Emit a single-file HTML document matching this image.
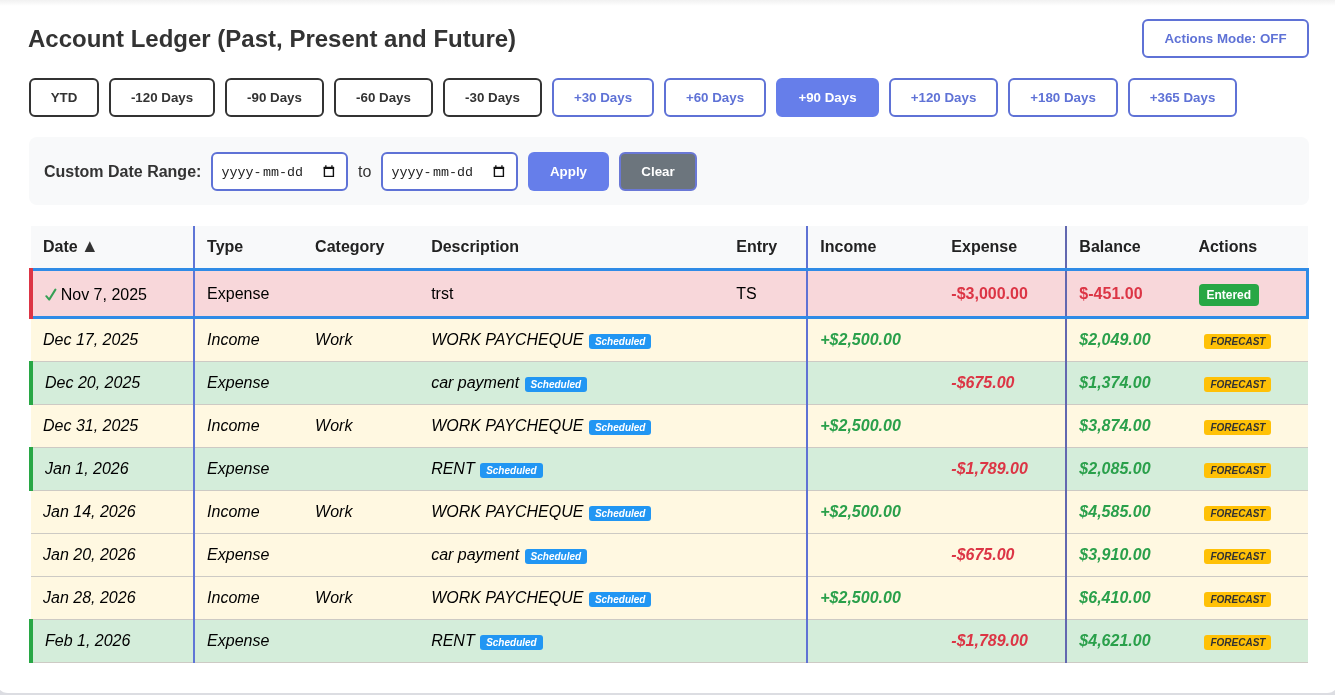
<!DOCTYPE html>
<html><head><meta charset="utf-8">
<style>
*{box-sizing:border-box}
html,body{margin:0;padding:0;width:1335px;height:695px;overflow:hidden;background:#fff;font-family:"Liberation Sans",sans-serif;color:#333}
.topshade{position:absolute;left:0;top:0;width:1335px;height:6px;background:linear-gradient(#f1f1f1,#fff)}
.botshade{position:absolute;left:0;top:693px;width:1335px;height:2px;background:#dbdbdf}
h1{position:absolute;left:28px;top:25px;margin:0;font-size:24px;font-weight:bold;color:#333;line-height:28px}
.mode{position:absolute;left:1142px;top:19px;width:167px;height:39px;border:2px solid #5f72d6;border-radius:6px;background:#fff;color:#5f72d6;font-size:13.333px;font-weight:bold;display:flex;align-items:center;justify-content:center}
.btn{position:absolute;top:78px;height:39px;border:2px solid #333;border-radius:6px;background:#fff;color:#333;font-size:13.333px;font-weight:bold;display:flex;align-items:center;justify-content:center}
.btn.f{border-color:#5f72d6;color:#5f72d6}
.btn.a{background:#667eea;color:#fff;border-color:#667eea}
.panel{position:absolute;left:29px;top:137px;width:1280px;height:68px;background:#f8f9fa;border-radius:8px}
.lbl{position:absolute;left:44px;top:163px;font-size:16px;font-weight:bold;color:#333;line-height:18px}
.inp{position:absolute;top:152px;width:137px;height:39px;border:2px solid #5f72d6;border-radius:6px;background:#fff}
.inp span{position:absolute;left:8.5px;top:11px;font-family:"Liberation Mono",monospace;font-size:13.333px;line-height:16px;color:#222}
.inp svg{position:absolute;left:110px;top:11px}
.to{position:absolute;left:358px;top:162.5px;font-size:16px;color:#333}
.apply{position:absolute;left:528px;top:152px;width:81px;height:39px;border-radius:6px;background:#667eea;color:#fff;font-size:13.333px;padding-bottom:1px;font-weight:bold;display:flex;align-items:center;justify-content:center}
.clear{position:absolute;left:619px;top:152px;width:78px;height:39px;border-radius:6px;background:#6c757d;border:2px solid #6a78d6;color:#fff;font-size:13.333px;padding-bottom:1px;font-weight:bold;display:flex;align-items:center;justify-content:center}
table{position:absolute;left:29px;top:226px;width:1280px;border-collapse:collapse;font-size:16px}
th{background:#f8f9fa;text-align:left;padding:12px;font-weight:bold;color:#222;height:42px;border-bottom:1px solid #ddd}
td{padding:12px;height:43px;border-bottom:1px solid #cdcac4;color:#000}
th:nth-child(1),td:nth-child(1){border-right:2px solid #5f75d6}
th:nth-child(5),td:nth-child(5){border-right:2px solid #5f72d4}
th:nth-child(7),td:nth-child(7){border-right:2px solid #6268b0}
tr.sel td{padding:12px 12px 11px;background:#f8d7da;border-top:3px solid #2f8be6;border-bottom:3px solid #2f8be6;font-style:normal}
tr.sel td:first-child{border-left:4px solid #dc3545;padding-top:13px;padding-bottom:10px}
tr.sel td:last-child{border-right:3px solid #2f8be6}
tr.y td{background:#fff8e1;font-style:italic}
tr.g td{background:#d4edda;font-style:italic}
tr.g td:first-child{border-left:4px solid #28a745}
.red{color:#dc3545;font-weight:bold}
.grn{color:#2aa04b;font-weight:bold}
.sch{display:inline-block;background:#2196f3;color:#fff;font-size:10px;font-weight:bold;padding:2px 6px;border-radius:3px;vertical-align:middle;line-height:11px;position:relative;top:1px;left:1px}
.fc{display:inline-block;background:#ffc107;color:#333;font-size:10px;font-weight:bold;padding:2px 0 2px 6px;width:67px;border-radius:3px;line-height:11px;margin-left:6px;vertical-align:middle;position:relative;top:1px}
.ent{display:inline-block;background:#28a745;color:#fff;font-size:12px;font-weight:bold;padding:4px 8px 4px 7px;border-radius:4px;line-height:14px;vertical-align:-1px;margin-left:1px;position:relative;top:1px}
.chk{vertical-align:-1px;margin-right:3.7px}
</style></head><body><div id="wrap" style="will-change:transform;position:absolute;left:0;top:0;width:1335px;height:695px">
<div class="topshade"></div>
<div style="position:absolute;left:0;top:678px;width:1335px;height:17px;background:#dcdde2"></div>
<div style="position:absolute;left:-4px;top:600px;width:1343px;height:93px;background:#fff;border-radius:0 0 12px 12px"></div>
<h1>Account Ledger (Past, Present and Future)</h1>
<div class="mode">Actions Mode: OFF</div>
<div class="btn" style="left:29px;width:70px">YTD</div>
<div class="btn" style="left:109px;width:106px">-120 Days</div>
<div class="btn" style="left:225px;width:99px">-90 Days</div>
<div class="btn" style="left:334px;width:99px">-60 Days</div>
<div class="btn" style="left:443px;width:99px">-30 Days</div>
<div class="btn f" style="left:552px;width:102px">+30 Days</div>
<div class="btn f" style="left:664px;width:102px">+60 Days</div>
<div class="btn a" style="left:776px;width:103px">+90 Days</div>
<div class="btn f" style="left:889px;width:109px">+120 Days</div>
<div class="btn f" style="left:1008px;width:110px">+180 Days</div>
<div class="btn f" style="left:1128px;width:109px">+365 Days</div>
<div class="panel"></div>
<div class="lbl">Custom Date Range:</div>
<div class="inp" style="left:211px"><span>yyyy-<i style="font-style:normal;margin-left:1.6px">mm</i>-dd</span><svg width="12" height="14" viewBox="0 0 12 14"><path d="M2.2 0.3h1.3v2h-1.3zM8.3 0.3h1.3v2h-1.3z" fill="#111"/><path d="M0.7 1.8h10.4v2.2h-10.4z" fill="#111"/><path d="M0.7 2h1.4v10.1h-1.4zM9.7 2h1.4v10.1h-1.4zM0.7 10.8h10.4v1.3h-10.4z" fill="#111"/></svg></div>
<div class="to">to</div>
<div class="inp" style="left:381px"><span>yyyy-<i style="font-style:normal;margin-left:1.6px">mm</i>-dd</span><svg width="12" height="14" viewBox="0 0 12 14"><path d="M2.2 0.3h1.3v2h-1.3zM8.3 0.3h1.3v2h-1.3z" fill="#111"/><path d="M0.7 1.8h10.4v2.2h-10.4z" fill="#111"/><path d="M0.7 2h1.4v10.1h-1.4zM9.7 2h1.4v10.1h-1.4zM0.7 10.8h10.4v1.3h-10.4z" fill="#111"/></svg></div>
<div class="apply">Apply</div>
<div class="clear">Clear</div>
<table>
<colgroup><col style="width:163px"><col style="width:109px"><col style="width:116px"><col style="width:305px"><col style="width:83px"><col style="width:132px"><col style="width:127px"><col style="width:120px"><col style="width:121px"></colgroup>
<thead><tr><th>Date <svg width="14" height="11" viewBox="0 0 14 11" style="vertical-align:baseline"><path d="M7.8 0.2L13 11H2.6Z" fill="#333"/></svg></th><th>Type</th><th>Category</th><th>Description</th><th>Entry</th><th>Income</th><th>Expense</th><th>Balance</th><th>Actions</th></tr></thead>
<tbody>
<tr class="sel"><td><svg class="chk" width="12" height="14" viewBox="0 0 12 14"><path d="M1.3 9.2L4.2 12.6L10.4 2.6" fill="none" stroke="#36a055" stroke-width="2" stroke-linecap="round" stroke-linejoin="round"/></svg>Nov 7, 2025</td><td>Expense</td><td></td><td>trst</td><td>TS</td><td></td><td class="red">-$3,000.00</td><td class="red">$-451.00</td><td><span class="ent">Entered</span></td></tr>
<tr class="y"><td>Dec 17, 2025</td><td>Income</td><td>Work</td><td>WORK PAYCHEQUE <span class="sch">Scheduled</span></td><td></td><td class="grn">+$2,500.00</td><td></td><td class="grn">$2,049.00</td><td><span class="fc">FORECAST</span></td></tr>
<tr class="g"><td>Dec 20, 2025</td><td>Expense</td><td></td><td>car payment <span class="sch">Scheduled</span></td><td></td><td></td><td class="red">-$675.00</td><td class="grn">$1,374.00</td><td><span class="fc">FORECAST</span></td></tr>
<tr class="y"><td>Dec 31, 2025</td><td>Income</td><td>Work</td><td>WORK PAYCHEQUE <span class="sch">Scheduled</span></td><td></td><td class="grn">+$2,500.00</td><td></td><td class="grn">$3,874.00</td><td><span class="fc">FORECAST</span></td></tr>
<tr class="g"><td>Jan 1, 2026</td><td>Expense</td><td></td><td>RENT <span class="sch">Scheduled</span></td><td></td><td></td><td class="red">-$1,789.00</td><td class="grn">$2,085.00</td><td><span class="fc">FORECAST</span></td></tr>
<tr class="y"><td>Jan 14, 2026</td><td>Income</td><td>Work</td><td>WORK PAYCHEQUE <span class="sch">Scheduled</span></td><td></td><td class="grn">+$2,500.00</td><td></td><td class="grn">$4,585.00</td><td><span class="fc">FORECAST</span></td></tr>
<tr class="y"><td>Jan 20, 2026</td><td>Expense</td><td></td><td>car payment <span class="sch">Scheduled</span></td><td></td><td></td><td class="red">-$675.00</td><td class="grn">$3,910.00</td><td><span class="fc">FORECAST</span></td></tr>
<tr class="y"><td>Jan 28, 2026</td><td>Income</td><td>Work</td><td>WORK PAYCHEQUE <span class="sch">Scheduled</span></td><td></td><td class="grn">+$2,500.00</td><td></td><td class="grn">$6,410.00</td><td><span class="fc">FORECAST</span></td></tr>
<tr class="g"><td>Feb 1, 2026</td><td>Expense</td><td></td><td>RENT <span class="sch">Scheduled</span></td><td></td><td></td><td class="red">-$1,789.00</td><td class="grn">$4,621.00</td><td><span class="fc">FORECAST</span></td></tr>
</tbody></table>
</div></body></html>
